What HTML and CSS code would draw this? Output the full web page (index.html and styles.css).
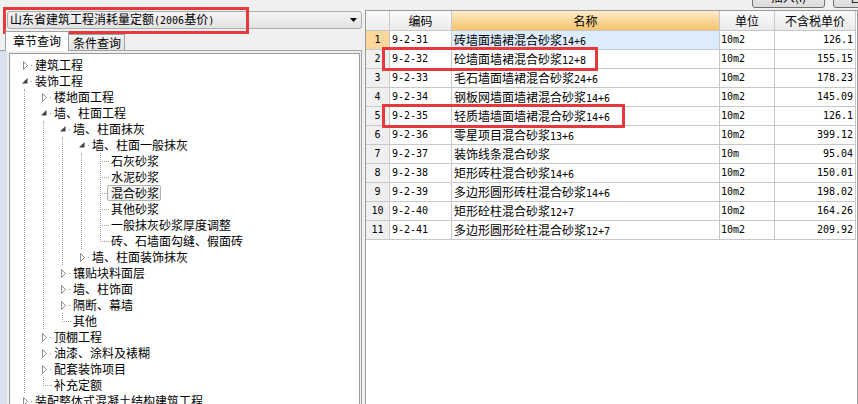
FILE: index.html
```html
<!DOCTYPE html>
<html lang="zh-CN">
<head>
    <meta charset="UTF-8">
    <title>定额查询</title>
    <link rel="stylesheet" href="styles.css">
</head>
<body>
    <svg class="defs" width="0" height="0">
        <defs>
            <symbol id="tri-closed" viewBox="0 0 9 16">
                <polygon points="2.5,4.5 6.5,8.5 2.5,12.5" fill="#fff" stroke="#8c8c8c" stroke-width="1"></polygon>
            </symbol>
            <symbol id="tri-open" viewBox="0 0 9 16">
                <polygon points="6.5,5 6.5,10.5 1,10.5" fill="#404040"></polygon>
            </symbol>
        </defs>
    </svg>

    <div class="app">
        <div class="side">
            <div class="combo">
                <span class="combo-text">山东省建筑工程消耗量定额<span class="asc">(2006</span>基价<span class="asc">)</span></span>
                <svg class="combo-arrow" width="7" height="4" viewBox="0 0 7 4"><polygon points="0,0 7,0 3.5,4" fill="#000"></polygon></svg>
            </div>

            <div class="tabs">
                <div class="tab active">章节查询</div>
                <div class="tab">条件查询</div>
            </div>

            <div class="tabpage">
                <div class="tree">
                    <div class="nodes">
                        <div class="node">
                            <div class="row"><svg class="tw"><use href="#tri-closed"></use></svg><span class="dash"></span><span class="label">建筑工程</span></div>
                        </div>
                        <div class="node">
                            <div class="row"><svg class="tw"><use href="#tri-open"></use></svg><span class="dash"></span><span class="label">装饰工程</span></div>
                            <div class="kids">
                                <div class="node">
                                    <div class="row"><svg class="tw"><use href="#tri-closed"></use></svg><span class="dash"></span><span class="label">楼地面工程</span></div>
                                </div>
                                <div class="node">
                                    <div class="row"><svg class="tw"><use href="#tri-open"></use></svg><span class="dash"></span><span class="label">墙、柱面工程</span></div>
                                    <div class="kids">
                                        <div class="node">
                                            <div class="row"><svg class="tw"><use href="#tri-open"></use></svg><span class="dash"></span><span class="label">墙、柱面抹灰</span></div>
                                            <div class="kids">
                                                <div class="node">
                                                    <div class="row"><svg class="tw"><use href="#tri-open"></use></svg><span class="dash"></span><span class="label">墙、柱面一般抹灰</span></div>
                                                    <div class="kids">
                                                        <div class="node leaf"><div class="row"><span class="tw"></span><span class="dash"></span><span class="label">石灰砂浆</span></div></div>
                                                        <div class="node leaf"><div class="row"><span class="tw"></span><span class="dash"></span><span class="label">水泥砂浆</span></div></div>
                                                        <div class="node leaf"><div class="row"><span class="tw"></span><span class="dash"></span><span class="label sel">混合砂浆</span></div></div>
                                                        <div class="node leaf"><div class="row"><span class="tw"></span><span class="dash"></span><span class="label">其他砂浆</span></div></div>
                                                        <div class="node leaf"><div class="row"><span class="tw"></span><span class="dash"></span><span class="label">一般抹灰砂浆厚度调整</span></div></div>
                                                        <div class="node leaf last"><div class="row"><span class="tw"></span><span class="dash"></span><span class="label">砖、石墙面勾缝、假面砖</span></div></div>
                                                    </div>
                                                </div>
                                                <div class="node">
                                                    <div class="row"><svg class="tw"><use href="#tri-closed"></use></svg><span class="dash"></span><span class="label">墙、柱面装饰抹灰</span></div>
                                                </div>
                                            </div>
                                        </div>
                                        <div class="node">
                                            <div class="row"><svg class="tw"><use href="#tri-closed"></use></svg><span class="dash"></span><span class="label">镶贴块料面层</span></div>
                                        </div>
                                        <div class="node">
                                            <div class="row"><svg class="tw"><use href="#tri-closed"></use></svg><span class="dash"></span><span class="label">墙、柱饰面</span></div>
                                        </div>
                                        <div class="node">
                                            <div class="row"><svg class="tw"><use href="#tri-closed"></use></svg><span class="dash"></span><span class="label">隔断、幕墙</span></div>
                                        </div>
                                        <div class="node leaf last"><div class="row"><span class="tw"></span><span class="dash"></span><span class="label">其他</span></div></div>
                                    </div>
                                </div>
                                <div class="node">
                                    <div class="row"><svg class="tw"><use href="#tri-closed"></use></svg><span class="dash"></span><span class="label">顶棚工程</span></div>
                                </div>
                                <div class="node">
                                    <div class="row"><svg class="tw"><use href="#tri-closed"></use></svg><span class="dash"></span><span class="label">油漆、涂料及裱糊</span></div>
                                </div>
                                <div class="node">
                                    <div class="row"><svg class="tw"><use href="#tri-closed"></use></svg><span class="dash"></span><span class="label">配套装饰项目</span></div>
                                </div>
                                <div class="node leaf last"><div class="row"><span class="tw"></span><span class="dash"></span><span class="label">补充定额</span></div></div>
                            </div>
                        </div>
                        <div class="node">
                            <div class="row"><svg class="tw"><use href="#tri-closed"></use></svg><span class="dash"></span><span class="label">装配整体式混凝土结构建筑工程</span></div>
                        </div>
                    </div>
                </div>
            </div>
        </div>

        <div class="main">
            <div class="toolbar">
                <div class="btn">插入(I)</div>
                <div class="btn">替换(R)</div>
            </div>
            <div class="grid-panel">
                <div class="grid">
                    <div class="cell hd"></div>
                    <div class="cell hd">编码</div>
                    <div class="cell hd sorted">名称</div>
                    <div class="cell hd">单位</div>
                    <div class="cell hd">不含税单价</div>

                    <div class="cell rn current">1</div><div class="cell code">9-2-31</div><div class="cell name focus">砖墙面墙裙混合砂浆<span class="asc">14+6</span></div><div class="cell unit">10m2</div><div class="cell price">126.1</div>
                    <div class="cell rn">2</div><div class="cell code">9-2-32</div><div class="cell name">砼墙面墙裙混合砂浆<span class="asc">12+8</span></div><div class="cell unit">10m2</div><div class="cell price">155.15</div>
                    <div class="cell rn">3</div><div class="cell code">9-2-33</div><div class="cell name">毛石墙面墙裙混合砂浆<span class="asc">24+6</span></div><div class="cell unit">10m2</div><div class="cell price">178.23</div>
                    <div class="cell rn">4</div><div class="cell code">9-2-34</div><div class="cell name">钢板网墙面墙裙混合砂浆<span class="asc">14+6</span></div><div class="cell unit">10m2</div><div class="cell price">145.09</div>
                    <div class="cell rn">5</div><div class="cell code">9-2-35</div><div class="cell name">轻质墙墙面墙裙混合砂浆<span class="asc">14+6</span></div><div class="cell unit">10m2</div><div class="cell price">126.1</div>
                    <div class="cell rn">6</div><div class="cell code">9-2-36</div><div class="cell name">零星项目混合砂浆<span class="asc">13+6</span></div><div class="cell unit">10m2</div><div class="cell price">399.12</div>
                    <div class="cell rn">7</div><div class="cell code">9-2-37</div><div class="cell name">装饰线条混合砂浆</div><div class="cell unit">10m</div><div class="cell price">95.04</div>
                    <div class="cell rn">8</div><div class="cell code">9-2-38</div><div class="cell name">矩形砖柱混合砂浆<span class="asc">14+6</span></div><div class="cell unit">10m2</div><div class="cell price">150.01</div>
                    <div class="cell rn">9</div><div class="cell code">9-2-39</div><div class="cell name">多边形圆形砖柱混合砂浆<span class="asc">14+6</span></div><div class="cell unit">10m2</div><div class="cell price">198.02</div>
                    <div class="cell rn">10</div><div class="cell code">9-2-40</div><div class="cell name">矩形砼柱混合砂浆<span class="asc">12+7</span></div><div class="cell unit">10m2</div><div class="cell price">164.26</div>
                    <div class="cell rn">11</div><div class="cell code">9-2-41</div><div class="cell name">多边形圆形砼柱混合砂浆<span class="asc">12+7</span></div><div class="cell unit">10m2</div><div class="cell price">209.92</div>
                </div>
            </div>
        </div>

        <!-- repères rouges par-dessus la capture -->
        <div class="mark mark-combo"></div>
        <div class="mark mark-row2"></div>
        <div class="mark mark-row5"></div>
    </div>
</body>
</html>
```

FILE: styles.css
```css
body {
    margin: 0;
    width: 858px;
    height: 404px;
    overflow: hidden;
    background-color: #f0f0f0;
    font-family: "Noto Sans CJK SC", sans-serif;
    font-size: 12px;
    color: #000;
}
.defs {
    position: absolute;
}
.asc {
    font-family: "DejaVu Sans Mono", monospace;
    font-size: 10px;
}

.app {
    position: relative;
    display: flex;
    height: 404px;
}

/****** PANNEAU GAUCHE ******/
.side {
    width: 362px;
    display: flex;
    flex-direction: column;
    flex-shrink: 0;
}
.combo {
    display: flex;
    align-items: center;
    justify-content: space-between;
    box-sizing: border-box;
    margin: 11px 0 0 7px;
    width: 355px;
    height: 18px;
    padding: 0 4px 0 2px;
    border: 1px solid #acacac;
    border-radius: 3px;
    background: linear-gradient(#f4f4f4, #e2e2e2);
    line-height: 16px;
    white-space: nowrap;
}
.combo-arrow {
    display: block;
}

.tabs {
    display: flex;
    align-items: flex-end;
    height: 19px;
    margin-top: 2px;
    padding-left: 5px;
    position: relative;
    z-index: 1;
}
.tab {
    box-sizing: border-box;
    height: 16px;
    width: 56px;
    padding-left: 4px;
    border: 1px solid #a0a0a0;
    border-left: none;
    border-bottom: none;
    background: linear-gradient(#f3f3f3, #e3e3e3);
    line-height: 15px;
    white-space: nowrap;
}
.tab.active {
    height: 20px;
    width: 64px;
    margin-bottom: -1px;
    padding-left: 0;
    border-left: 1px solid #a0a0a0;
    background: #fff;
    text-align: center;
    line-height: 18px;
}

.tabpage {
    flex: 1;
    box-sizing: border-box;
    padding: 2px 1px 0 9px;
    border-top: 1px solid #a0a0a0;
    border-right: 1px solid #a0a0a0;
    background: linear-gradient(to right, #d8e2ee 0 7px, #f0f0f0 7px);
    overflow: hidden;
}
.tree {
    height: 380px;
    padding-top: 3px;
    border: 1px solid #9a9a9a;
    background: #fff;
    overflow: hidden;
}
.nodes {
    margin-left: -4px;
}
.row {
    display: flex;
    align-items: center;
    height: 16px;
    padding-left: 15px;
    line-height: 16px;
    white-space: nowrap;
}
.tw {
    display: block;
    width: 9px;
    height: 16px;
    flex-shrink: 0;
}
.dash {
    width: 5px;
    height: 16px;
    flex-shrink: 0;
    background: linear-gradient(#9a9a9a, #9a9a9a) 1px 8px / 1px 1px no-repeat;
}
.kids {
    margin-left: 18px;
    border-left: 1px dotted #a0a0a0;
}
/* feuilles : coude pointillé */
.leaf .tw {
    background:
        repeating-linear-gradient(to bottom, #a0a0a0 0 1px, transparent 1px 2px) 3px 0 / 1px 16px no-repeat,
        repeating-linear-gradient(to right, #a0a0a0 0 1px, transparent 1px 2px) 3px 8px / 6px 1px no-repeat;
}
.leaf.last .tw {
    background:
        repeating-linear-gradient(to bottom, #a0a0a0 0 1px, transparent 1px 2px) 3px 0 / 1px 9px no-repeat,
        repeating-linear-gradient(to right, #a0a0a0 0 1px, transparent 1px 2px) 3px 8px / 6px 1px no-repeat;
}
.leaf .dash {
    background: repeating-linear-gradient(to right, #a0a0a0 0 1px, transparent 1px 2px) 0 8px / 4px 1px no-repeat;
}
.sel {
    display: inline-block;
    box-sizing: border-box;
    height: 16px;
    margin-left: -4px;
    padding: 0 1px 0 3px;
    border: 1px solid #b0b0b0;
    border-radius: 2px;
    background: #f4f4f4;
    line-height: 14px;
}

/****** GRILLE DROITE ******/
.main {
    flex: 1;
    display: flex;
    flex-direction: column;
    margin-left: 3px;
    min-width: 0;
}
.toolbar {
    display: flex;
    align-items: flex-end;
    gap: 8px;
    height: 10px;
    padding-left: 387px;
    overflow: hidden;
}
.btn {
    flex-shrink: 0;
    box-sizing: border-box;
    width: 73px;
    height: 22px;
    margin-bottom: 2px;
    border: 1px solid #707070;
    border-radius: 3px;
    background: linear-gradient(#f2f2f2, #dcdcdc);
    text-align: center;
    line-height: 20px;
}
.grid-panel {
    flex: 1;
    border: 1px solid #9a9a9a;
    border-bottom: none;
    background: #fff;
}
.grid {
    display: grid;
    grid-template-columns: 24px 62px 268px 55px 81px;
    grid-template-rows: 20px;
    grid-auto-rows: 19px;
}
.cell {
    box-sizing: border-box;
    padding: 0 2px;
    border-right: 1px solid #c8c8c8;
    border-bottom: 1px solid #c8c8c8;
    line-height: 18px;
    white-space: nowrap;
    overflow: hidden;
}
.hd {
    text-align: center;
    line-height: 19px;
    background: linear-gradient(#fafafa, #ebebeb);
}
.hd.sorted {
    background: linear-gradient(#fdeccb, #f5c26a);
}
.rn {
    padding: 0;
    text-align: center;
    background: #f0f0f0;
    font-family: "DejaVu Sans Mono", monospace;
    font-size: 10px;
}
.rn.current {
    background: #fcd79b;
}
.code, .unit, .price {
    font-family: "DejaVu Sans Mono", monospace;
    font-size: 10px;
}
.unit {
    padding-left: 1px;
}
.price {
    text-align: right;
}
.name.focus {
    background: #ddecfc;
}

/****** REPÈRES ROUGES ******/
.mark {
    position: absolute;
    box-sizing: border-box;
    border: 3px solid #e6393e;
}
.mark-combo {
    left: 3px;
    top: 7px;
    width: 246px;
    height: 27px;
}
.mark-row2 {
    left: 382px;
    top: 47px;
    width: 216px;
    height: 24px;
}
.mark-row5 {
    left: 382px;
    top: 104px;
    width: 243px;
    height: 24px;
}
```
